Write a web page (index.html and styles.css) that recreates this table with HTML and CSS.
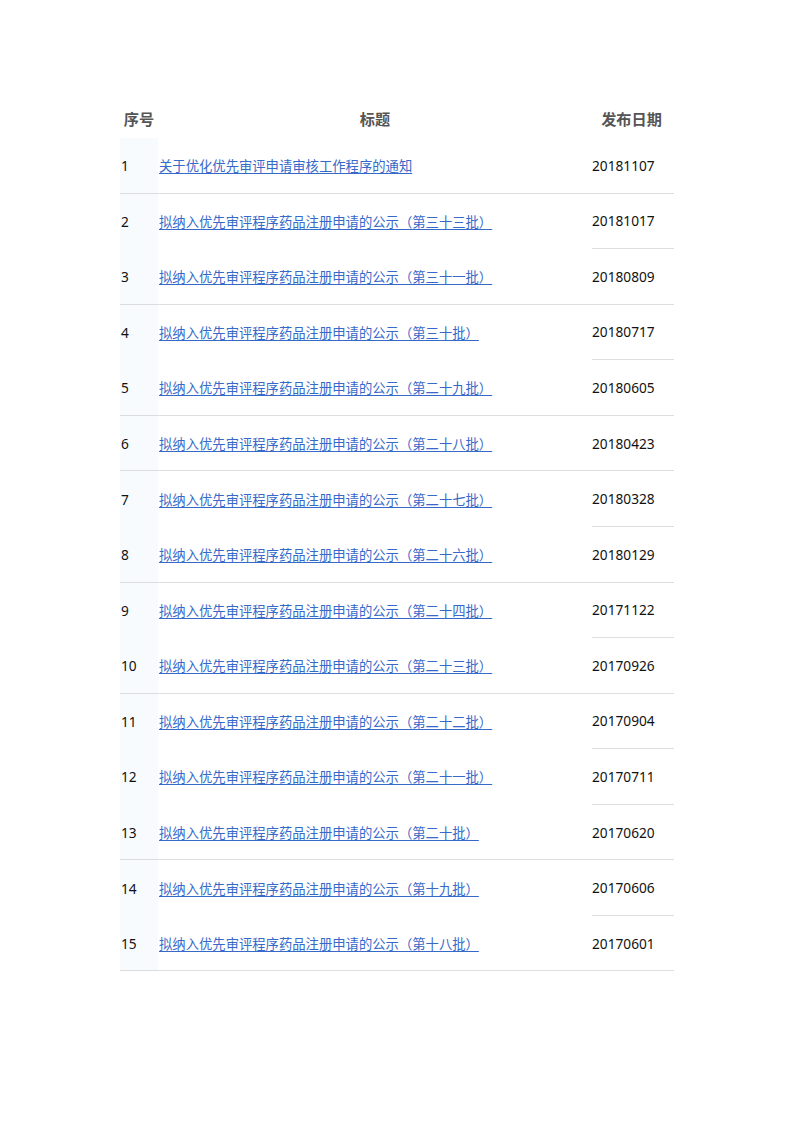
FILE: index.html
```html
<!doctype html>
<html>
<head>
	<meta charset="utf-8">
	<title>优先审评公示列表</title>
	<link rel="stylesheet" href="styles.css">
</head>
<body>
	<div id="list">
		<div class="head">
			<span>序号</span>
			<span>标题</span>
			<span>发布日期</span>
		</div>
		<div class="row full"><span class="num">1</span><span class="title"><a href="#">关于优化优先审评申请审核工作程序的通知</a></span><span class="date">20181107</span></div>
		<div class="row half"><span class="num">2</span><span class="title"><a href="#">拟纳入优先审评程序药品注册申请的公示（第三十三批）</a></span><span class="date">20181017</span></div>
		<div class="row full"><span class="num">3</span><span class="title"><a href="#">拟纳入优先审评程序药品注册申请的公示（第三十一批）</a></span><span class="date">20180809</span></div>
		<div class="row half"><span class="num">4</span><span class="title"><a href="#">拟纳入优先审评程序药品注册申请的公示（第三十批）</a></span><span class="date">20180717</span></div>
		<div class="row full"><span class="num">5</span><span class="title"><a href="#">拟纳入优先审评程序药品注册申请的公示（第二十九批）</a></span><span class="date">20180605</span></div>
		<div class="row full"><span class="num">6</span><span class="title"><a href="#">拟纳入优先审评程序药品注册申请的公示（第二十八批）</a></span><span class="date">20180423</span></div>
		<div class="row half"><span class="num">7</span><span class="title"><a href="#">拟纳入优先审评程序药品注册申请的公示（第二十七批）</a></span><span class="date">20180328</span></div>
		<div class="row full"><span class="num">8</span><span class="title"><a href="#">拟纳入优先审评程序药品注册申请的公示（第二十六批）</a></span><span class="date">20180129</span></div>
		<div class="row half"><span class="num">9</span><span class="title"><a href="#">拟纳入优先审评程序药品注册申请的公示（第二十四批）</a></span><span class="date">20171122</span></div>
		<div class="row full"><span class="num">10</span><span class="title"><a href="#">拟纳入优先审评程序药品注册申请的公示（第二十三批）</a></span><span class="date">20170926</span></div>
		<div class="row half"><span class="num">11</span><span class="title"><a href="#">拟纳入优先审评程序药品注册申请的公示（第二十二批）</a></span><span class="date">20170904</span></div>
		<div class="row half"><span class="num">12</span><span class="title"><a href="#">拟纳入优先审评程序药品注册申请的公示（第二十一批）</a></span><span class="date">20170711</span></div>
		<div class="row full"><span class="num">13</span><span class="title"><a href="#">拟纳入优先审评程序药品注册申请的公示（第二十批）</a></span><span class="date">20170620</span></div>
		<div class="row half"><span class="num">14</span><span class="title"><a href="#">拟纳入优先审评程序药品注册申请的公示（第十九批）</a></span><span class="date">20170606</span></div>
		<div class="row full"><span class="num">15</span><span class="title"><a href="#">拟纳入优先审评程序药品注册申请的公示（第十八批）</a></span><span class="date">20170601</span></div>
	</div>
</body>
</html>
```

FILE: styles.css
```css
* { margin: 0; padding: 0; }
body { padding: 97px 0 0 120px; background: #fff; font-family: "Noto Sans", "Noto Sans CJK SC", sans-serif; font-size: 13.33px; color: #111; }

#list { width: 554px; }

.head { display: grid; grid-template-columns: 38px 434px 82px; height: 41px; align-items: center; text-align: center; font-size: 15.2px; font-weight: bold; color: #555; }
.head span:last-child { padding-right: 3px; }

.row { display: grid; grid-template-columns: 38px 434px 82px; height: 55.57px; }
.row span { display: flex; align-items: center; box-sizing: border-box; }
.row .num { background: #f8fbfe; padding-left: 1px; font-size: 13.7px; }
.row .date { font-size: 13.7px; }
.row .title { padding-left: 1px; }
.row.full span { border-bottom: 1px solid #dddddd; }
.row.half .date { border-bottom: 1px solid #dddddd; }

.title a { color: #3769c9; text-decoration: underline; text-underline-offset: 2px; }
```
